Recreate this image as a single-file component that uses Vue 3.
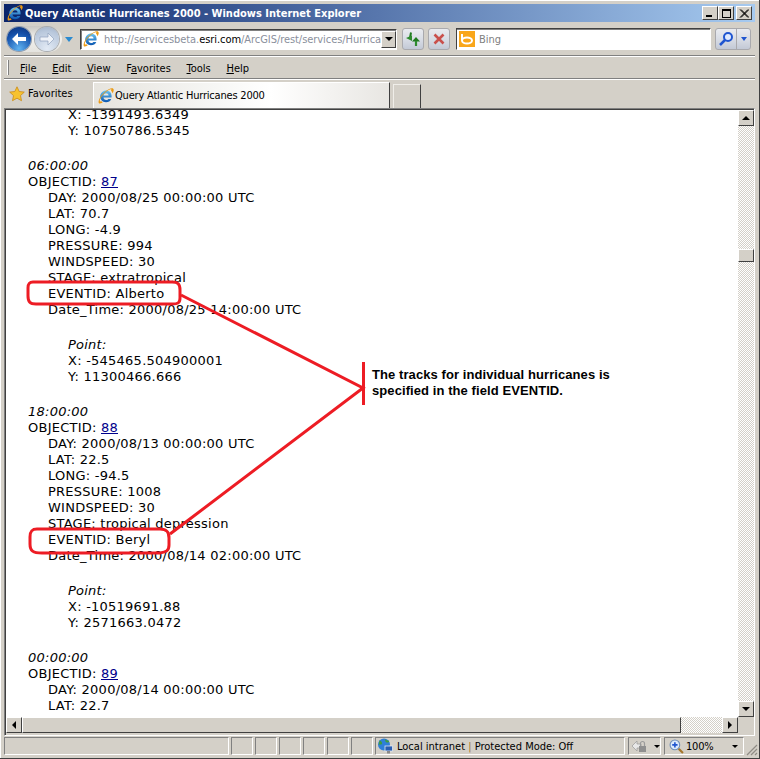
<script setup>
const menus = [
  { key: 'F', rest: 'ile' },
  { key: 'E', rest: 'dit' },
  { key: 'V', rest: 'iew' },
  { pre: 'F', key: 'a', rest: 'vorites' },
  { key: 'T', rest: 'ools' },
  { key: 'H', rest: 'elp' },
]

const records = [
  {
    time: '06:00:00', id: 87,
    fields: ['DAY: 2000/08/25 00:00:00 UTC', 'LAT: 70.7', 'LONG: -4.9', 'PRESSURE: 994', 'WINDSPEED: 30', 'STAGE: extratropical', 'EVENTID: Alberto', 'Date_Time: 2000/08/25 14:00:00 UTC'],
    x: '-545465.504900001', y: '11300466.666',
  },
  {
    time: '18:00:00', id: 88,
    fields: ['DAY: 2000/08/13 00:00:00 UTC', 'LAT: 22.5', 'LONG: -94.5', 'PRESSURE: 1008', 'WINDSPEED: 30', 'STAGE: tropical depression', 'EVENTID: Beryl', 'Date_Time: 2000/08/14 02:00:00 UTC'],
    x: '-10519691.88', y: '2571663.0472',
  },
  {
    time: '00:00:00', id: 89,
    fields: ['DAY: 2000/08/14 00:00:00 UTC', 'LAT: 22.7'],
  },
]

const statusCells = [22, 22, 22, 22, 22, 22]
</script>

<template>
  <div class="window">
    <svg width="0" height="0" class="defs">
      <defs>
        <linearGradient id="ieblue" x1="0" y1="0" x2="0" y2="1">
          <stop offset="0" stop-color="#6cc6f2" />
          <stop offset="1" stop-color="#0a56b0" />
        </linearGradient>
        <symbol id="ie" viewBox="0 0 16 16">
          <path d="M8.200 2.400C4.900 2.400 2.400 4.900 2.200 8 2 11.500 4.600 14.200 8 14.200c2.400 0 4.400-1.200 5.300-3.300h-3c-.5.800-1.300 1.200-2.200 1.200-1.400 0-2.500-1-2.600-2.500h8c.1-.6.1-1 .1-1.500C13.600 4.600 11.300 2.400 8.200 2.400zM5.500 7.500c.2-1.300 1.300-2.200 2.600-2.200 1.400 0 2.400.9 2.500 2.200z" fill="url(#ieblue)" />
          <path d="M.9 15.200C-.3 13.400 2.200 8.200 6 4.700 9.800 1.200 13.900-.5 15.200.7c1 .9.400 2.800-.7 4.600-.2-1.300-.8-2.200-1.500-2.900.4-.5.500-.9.300-1.100-.6-.6-3.700 1-6.800 3.900C3.400 8.100 1.300 12 1.900 13.200c.2.300.8.300 1.500.1.300.4.800.8 1.300 1.100-1.700.9-3.200 1.300-3.800.8z" fill="#eb9a14" />
        </symbol>
      </defs>
    </svg>

    <div class="titlebar">
      <svg class="ie-icon big" viewBox="0 0 16 16"><use href="#ie" /></svg>
      <span class="title">Query Atlantic Hurricanes 2000 - Windows Internet Explorer</span>
      <div class="win-btns">
        <button class="win-btn"><i class="min"></i></button>
        <button class="win-btn"><i class="max"></i></button>
        <button class="win-btn close">
          <svg viewBox="0 0 10 9" width="10" height="9"><path d="M1 0.5L9 8.5M2 0.5L10 8.5M9 0.5L1 8.5M10 0.5L2 8.5" stroke="#000" stroke-width="1" fill="none" /></svg>
        </button>
      </div>
    </div>

    <div class="navbar">
      <div class="nav-pod">
        <span class="round back">
          <svg viewBox="0 0 24 24" width="24" height="24"><path d="M5 12l6-6v4h8v4h-8v4z" fill="#fff" /></svg>
        </span>
        <span class="round forward">
          <svg viewBox="0 0 24 24" width="24" height="24"><path d="M19 12l-6-6v4H5v4h8v4z" fill="#eef2f8" stroke="#8fa2bd" stroke-width="0.7" /></svg>
        </span>
      </div>
      <i class="nav-drop"></i>
      <div class="address">
        <span class="page-icon">
          <svg class="ie-icon" viewBox="0 0 16 16"><use href="#ie" /></svg>
        </span>
        <span class="url">http://servicesbeta.<b>esri.com</b>/ArcGIS/rest/services/Hurrica</span>
        <button class="combo"><i class="tri-down"></i></button>
      </div>
      <button class="tool-btn refresh">
        <svg viewBox="0 0 18 18" width="18" height="18">
          <path d="M7 2.500L6 8" stroke="#1f7a1f" stroke-width="2" fill="none" />
          <path d="M2 8L8 5.500V11z" fill="#2e8b2e" />
          <path d="M8 11.500L12 7l4 4.500z" fill="#1f7a1f" />
          <path d="M12 11v5" stroke="#2e8b2e" stroke-width="2.200" fill="none" />
        </svg>
      </button>
      <button class="tool-btn stop">
        <svg viewBox="0 0 18 18" width="18" height="18"><path d="M4.500 4.500L13.500 13.500M13.500 4.500L4.500 13.500" stroke="#c9504c" stroke-width="2.600" /></svg>
      </button>
      <div class="search">
        <span class="bing">
          <svg viewBox="0 0 16 16" width="16" height="16"><rect width="16" height="16" fill="#f9a61a" /><path d="M3 3v6" stroke="#fff" stroke-width="2" /><ellipse cx="8" cy="9.500" rx="5" ry="3" fill="none" stroke="#fff" stroke-width="2" /></svg>
        </span>
        <span class="bing-text">Bing</span>
      </div>
      <div class="search-btns">
        <button class="search-go">
          <svg viewBox="0 0 16 16" width="16" height="16"><circle cx="10" cy="6" r="4" fill="#dfeaff" stroke="#1f55d0" stroke-width="2" /><path d="M7 9L2 14" stroke="#1f55d0" stroke-width="2.500" /></svg>
        </button>
        <button class="search-drop"><i class="blue-tri"></i></button>
      </div>
    </div>

    <div class="menubar">
      <i class="grip"></i>
      <span v-for="m in menus" :key="m.key" class="menu-item">{{ m.pre }}<u>{{ m.key }}</u>{{ m.rest }}</span>
    </div>

    <div class="tabbar">
      <div class="favorites">
        <svg viewBox="0 0 16 16" width="16" height="16"><path d="M8 .8l2.200 4.700 5.100.6-3.800 3.500 1 5.100L8 12.200l-4.500 2.500 1-5.100L.7 6.100l5.100-.6z" fill="#f7c22e" stroke="#c98a18" stroke-width=".8" /></svg>
        <span>Favorites</span>
      </div>
      <div class="tab">
        <svg class="ie-icon" viewBox="0 0 16 16"><use href="#ie" /></svg>
        <span>Query Atlantic Hurricanes 2000</span>
      </div>
      <div class="new-tab"></div>
    </div>

    <div class="frame">
      <div class="viewport">
        <div class="page">
          <div class="point first">
            <div class="cut">X: -1391493.6349</div>
            <div>Y: 10750786.5345</div>
          </div>
          <template v-for="r in records" :key="r.id">
            <div class="record">
              <div><em>{{ r.time }}</em></div>
              <div>OBJECTID: <a href="#">{{ r.id }}</a></div>
              <div class="fields">
                <div v-for="f in r.fields" :key="f">{{ f }}</div>
              </div>
            </div>
            <div v-if="r.x" class="point">
              <div><em>Point:</em></div>
              <div>X: {{ r.x }}</div>
              <div>Y: {{ r.y }}</div>
            </div>
          </template>
        </div>
        <div class="vscroll">
          <button class="sb-btn"><i class="tri-up"></i></button>
          <div class="track">
            <div class="thumb"></div>
          </div>
          <button class="sb-btn"><i class="tri-down"></i></button>
        </div>
      </div>
      <div class="hscroll">
        <button class="sb-btn"><i class="tri-left"></i></button>
        <div class="htrack">
          <div class="hthumb"></div>
        </div>
        <button class="sb-btn"><i class="tri-right"></i></button>
        <div class="corner"></div>
      </div>
    </div>

    <div class="statusbar">
      <div class="cell grow"></div>
      <div v-for="(w, i) in statusCells" :key="i" class="cell" :style="{ width: w + 'px' }"></div>
      <div class="cell zone">
        <svg viewBox="0 0 16 16" width="16" height="16"><circle cx="7" cy="6.500" r="6" fill="#2f7fd8" /><path d="M2.500 2.500c2 .5 3 2 2.500 3.500-1 1-2.500 0-3.500 1M8 1c1 1 2.500 1.500 4 2 .5 1-1 1.500-2.500 1.500C8.500 4 8 2.500 8 1z" fill="#3f9d3f" /><rect x="8" y="8" width="7.500" height="5" fill="#2a5db0" stroke="#dfe8f5" stroke-width=".8" /><rect x="10" y="13" width="3" height="2.500" fill="#8a8a8a" /></svg>
        <span>Local intranet <span class="pipe">|</span> Protected Mode: Off</span>
      </div>
      <div class="cell lock">
        <svg viewBox="0 0 18 16" width="18" height="16"><path d="M1 8l5-5v3h4v4H6v3z" fill="#e8e8e8" stroke="#9a9a9a" stroke-width=".7" /><rect x="8" y="8" width="7" height="6" fill="#8f8f8f" /><path d="M9.500 8V5.500a2 2 0 0 1 4 0V8" fill="none" stroke="#9a9a9a" stroke-width="1.200" /></svg>
        <i class="tri-down small"></i>
      </div>
      <div class="cell zoom">
        <svg viewBox="0 0 14 14" width="15" height="15"><circle cx="5.500" cy="5.500" r="4.500" fill="#dbe9fb" stroke="#6f8fb8" /><path d="M3 5.500h5M5.500 3v5" stroke="#1f55d0" stroke-width="1.500" /><path d="M9 9l4 4" stroke="#a5762a" stroke-width="2" /></svg>
        <span class="zoom-val">100%</span>
        <i class="tri-down small"></i>
      </div>
      <div class="size-grip">
        <svg viewBox="0 0 12 12" width="12" height="12"><path d="M11 1L1 11M11 5L5 11M11 9L9 11" stroke="#8f8c85" stroke-width="1.200" fill="none" /></svg>
      </div>
    </div>

    <svg class="annotation" viewBox="0 0 760 759" width="760" height="759">
      <g fill="none" stroke="#ed1c24" stroke-width="3">
        <path d="M33 282H172C178 282 180 284 180 290V298C180 303 178 304 172 304H36C30 304 28 302 28 296V288C28 284 29 282 33 282Z" />
        <path d="M37 529H160C167 529 169 532 169 538V545C169 551 166 552 160 553H42C33 553 30 551 30 544V537C30 531 32 529 37 529Z" />
        <path d="M181 295L363 388L170 534" />
        <path d="M363.500 362V405" stroke-width="3" />
      </g>
    </svg>
    <div class="note">The tracks for individual hurricanes is<br />specified in the field EVENTID.</div>
  </div>
</template>

<style>
html, body {
  margin: 0;
  padding: 0;
  background: #d4d0c8;
  overflow: hidden;
}
</style>

<style scoped>
.window {
  position: relative;
  width: 760px;
  height: 759px;
  box-sizing: border-box;
  padding: 4px 4px 2px;
  background: #d4d0c8;
  border-right: 1px solid #404040;
  border-bottom: 1px solid #404040;
  box-shadow: inset 1px 1px 0 #fff;
  font-family: "DejaVu Sans Condensed", "DejaVu Sans", sans-serif;
  font-size: 11px;
  color: #000;
  display: flex;
  flex-direction: column;
  overflow: hidden;
}
.defs { position: absolute; }
button {
  padding: 0;
  margin: 0;
  font: inherit;
  display: flex;
  align-items: center;
  justify-content: center;
}
.ie-icon { width: 16px; height: 16px; flex: none; }

/* title bar */
.titlebar {
  height: 18px;
  flex: none;
  display: flex;
  align-items: center;
  padding-left: 3px;
  background: linear-gradient(90deg, #0a246a, #a6caf0);
  color: #fff;
}
.title {
  margin-left: 2px;
  font-weight: bold;
  white-space: nowrap;
}
.win-btns {
  margin-left: auto;
  margin-right: 3px;
  display: flex;
}
.win-btn {
  width: 16px;
  height: 14px;
  box-sizing: border-box;
  background: #d4d0c8;
  border: 1px solid;
  border-color: #fff #404040 #404040 #fff;
}
.win-btn.close { margin-left: 2px; }
.min { width: 6px; height: 2px; background: #000; margin-top: 6px; margin-right: 2px; }
.max { width: 9px; height: 9px; box-sizing: border-box; border: 1px solid #000; border-top-width: 2px; }

/* nav row */
.navbar {
  height: 34px;
  flex: none;
  display: flex;
  align-items: center;
  box-sizing: border-box;
  padding-top: 1px;
  border-bottom: 1px solid #808080;
  box-shadow: 0 1px 0 #fff;
}
.nav-pod {
  margin-left: 2px;
  width: 56px;
  height: 26px;
  box-sizing: border-box;
  padding-left: 1px;
  display: flex;
  gap: 4px;
  align-items: center;
  border-radius: 13px;
  background: linear-gradient(#c9c7c2, #f2f1ee 45%, #e4e3df);
}
.round {
  width: 24px;
  height: 24px;
  flex: none;
  border-radius: 50%;
  display: block;
}
.back {
  background: radial-gradient(circle at 50% 90%, #5fb2f0, #1552ac 60%, #0b2f78);
  box-shadow: 0 0 0 1px #8d98a8;
}
.forward {
  background: radial-gradient(circle at 50% 90%, #e2eaf5, #b9c8dc 70%, #9cadc5);
  box-shadow: 0 0 0 1px #a8acb0;
}
.nav-drop {
  margin-left: 3px;
  border: 4px solid transparent;
  border-top: 5px solid #2a8ad0;
  border-bottom: 0;
}
.address {
  margin-left: 7px;
  width: 317px;
  height: 21px;
  box-sizing: border-box;
  flex: none;
  display: flex;
  align-items: center;
  background: #fff;
  border: 1px solid;
  border-color: #404040 #fff #fff #404040;
  box-shadow: inset 1px 1px 0 #808080;
}
.page-icon { display: flex; margin-left: 2px; }
.url {
  margin-left: 5px;
  flex: 1;
  min-width: 0;
  color: #8a8f9c;
  white-space: nowrap;
  letter-spacing: -.06px;
  overflow: hidden;
}
.url b { font-weight: normal; color: #000; }
.combo {
  width: 15px;
  height: 17px;
  flex: none;
  box-sizing: border-box;
  background: #d4d0c8;
  border: 1px solid;
  border-color: #fff #404040 #404040 #fff;
}
.tool-btn {
  width: 22px;
  height: 22px;
  box-sizing: border-box;
  flex: none;
  border: 1px solid #a9a9ad;
  border-radius: 3px;
  background: linear-gradient(#e9ebef, #d7dbe4 55%, #c3c9d6);
}
.refresh { margin-left: 5px; }
.stop { margin-left: 4px; }
.search {
  margin-left: 6px;
  width: 255px;
  height: 22px;
  box-sizing: border-box;
  flex: none;
  display: flex;
  align-items: center;
  background: #fff;
  border: 1px solid;
  border-color: #404040 #fff #fff #404040;
  box-shadow: inset 0 1px 0 #808080;
}
.bing { display: flex; margin-left: 2px; }
.bing-text { margin-left: 4px; color: #808080; }
.search-btns {
  margin-left: 4px;
  display: flex;
  height: 22px;
  border: 1px solid #a9a9ad;
  border-radius: 3px;
  box-sizing: border-box;
  background: linear-gradient(#e9ebef, #d7dbe4 55%, #c3c9d6);
}
.search-go, .search-drop { background: none; border: 0; }
.search-go { width: 21px; border-right: 1px solid #a9a9ad; }
.search-drop { width: 13px; }
.blue-tri {
  border: 3px solid transparent;
  border-top: 4px solid #1f55d0;
  border-bottom: 0;
}

/* menu row */
.menubar {
  height: 23px;
  flex: none;
  box-sizing: border-box;
  padding: 3px 0 0 3px;
  display: flex;
  align-items: center;
  border-bottom: 1px solid #808080;
  box-shadow: 0 1px 0 #fff;
}
.grip {
  width: 1px;
  height: 15px;
  margin-top: -2px;
  background: #808080;
  border-left: 1px solid #fff;
  margin-right: 11px;
}
.menu-item { margin-right: 15.7px; white-space: nowrap; }

/* tab row */
.tabbar {
  height: 29px;
  flex: none;
  display: flex;
  align-items: flex-end;
}
.favorites {
  width: 89px;
  height: 26px;
  flex: none;
  display: flex;
  align-items: center;
  gap: 3px;
  padding-left: 5px;
  box-sizing: border-box;
  padding-bottom: 3px;
}
.tab {
  width: 297px;
  height: 26px;
  box-sizing: border-box;
  flex: none;
  display: flex;
  align-items: center;
  gap: 1px;
  padding-left: 4px;
  letter-spacing: -.2px;
  background: linear-gradient(90deg, #e6e4de, #f6f6f4 40%, #fff 60%, #e8e6e2);
  border-top: 1px solid #fff;
  border-left: 1px solid #fff;
  border-right: 1px solid #404040;
}
.new-tab {
  width: 28px;
  height: 24px;
  margin-left: 3px;
  box-sizing: border-box;
  border: 1px solid #f0eee9;
  border-right-color: #404040;
  border-bottom: 0;
}

/* document frame */
.frame {
  flex: 1;
  min-height: 0;
  display: flex;
  flex-direction: column;
  box-sizing: border-box;
  border: 1px solid;
  border-color: #808080 #fff #fff #808080;
  box-shadow: inset 1px 1px 0 #404040;
  padding: 1px 0 2px 1px;
}
.viewport {
  flex: 1;
  min-height: 0;
  display: flex;
}
.page {
  flex: 1;
  min-width: 0;
  overflow: hidden;
  background: #fff;
  box-sizing: border-box;
  padding: 0 0 0 22px;
  font-family: "DejaVu Sans", sans-serif;
  font-size: 13px;
  letter-spacing: .24px;
  line-height: 16px;
}
.point { margin: 19px 0 0 40px; }
.point.first { margin-top: 0; }
.cut { line-height: 10px; margin-bottom: 3px; }
.record { margin-top: 19px; }
.fields { margin-left: 20px; }
a { color: #00008b; }
.vscroll {
  width: 16px;
  flex: none;
  display: flex;
  flex-direction: column;
}
.sb-btn {
  width: 16px;
  height: 16px;
  flex: none;
  box-sizing: border-box;
  background: #d4d0c8;
  border: 1px solid;
  border-color: #fff #404040 #404040 #fff;
}
.track, .htrack {
  flex: 1;
  background-color: #fff;
  background-image: conic-gradient(#d4d0c8 25%, transparent 0 50%, #d4d0c8 0 75%, transparent 0);
  background-size: 2px 2px;
}
.track { padding-top: 123px; }
.thumb {
  height: 11px;
  background: #d4d0c8;
  border: 1px solid;
  border-color: #fff #404040 #404040 #fff;
}
.hscroll {
  height: 16px;
  flex: none;
  display: flex;
}
.htrack { flex: 1; }
.hthumb {
  width: 657px;
  height: 14px;
  background: #d4d0c8;
  border: 1px solid;
  border-color: #fff #404040 #404040 #fff;
}
.corner { width: 16px; background: #d4d0c8; }

/* status bar */
.statusbar {
  height: 20px;
  flex: none;
  display: flex;
  gap: 2px;
  box-sizing: border-box;
  padding-top: 1px;
}
.cell {
  height: 18px;
  box-sizing: border-box;
  flex: none;
  display: flex;
  align-items: center;
  border: 1px solid;
  border-color: #808080 #fff #fff #808080;
}
.cell.grow { width: 225px; }
.zone { width: 250px; padding-left: 1px; gap: 4px; white-space: nowrap; }
.pipe { color: #a5762a; }
.lock { width: 33px; margin-left: 1px; padding-left: 2px; gap: 5px; }
.zoom { width: 80px; margin-left: 1px; padding-left: 4px; gap: 2px; }
.zoom-val { letter-spacing: -.2px; }
.zoom .small { margin-left: 16px; }
.size-grip { margin-left: auto; align-self: flex-end; display: flex; }
.tri-down {
  border: 4px solid transparent;
  border-top: 4px solid #000;
  border-bottom: 0;
}
.tri-down.small { border-width: 3px 3px 0; border-top-color: #000; border-left-color: transparent; border-right-color: transparent; }
.tri-up {
  border: 4px solid transparent;
  border-bottom: 4px solid #000;
  border-top: 0;
}
.tri-left {
  border: 4px solid transparent;
  border-right: 4px solid #000;
  border-left: 0;
}
.tri-right {
  border: 4px solid transparent;
  border-left: 4px solid #000;
  border-right: 0;
}

/* red callout over the page */
.annotation {
  position: absolute;
  left: 0;
  top: 0;
  pointer-events: none;
}
.note {
  position: absolute;
  left: 372px;
  top: 367px;
  font-family: "Liberation Sans", Arial, sans-serif;
  font-weight: bold;
  font-size: 13px;
  line-height: 16px;
  letter-spacing: .08px;
  white-space: nowrap;
}
</style>
